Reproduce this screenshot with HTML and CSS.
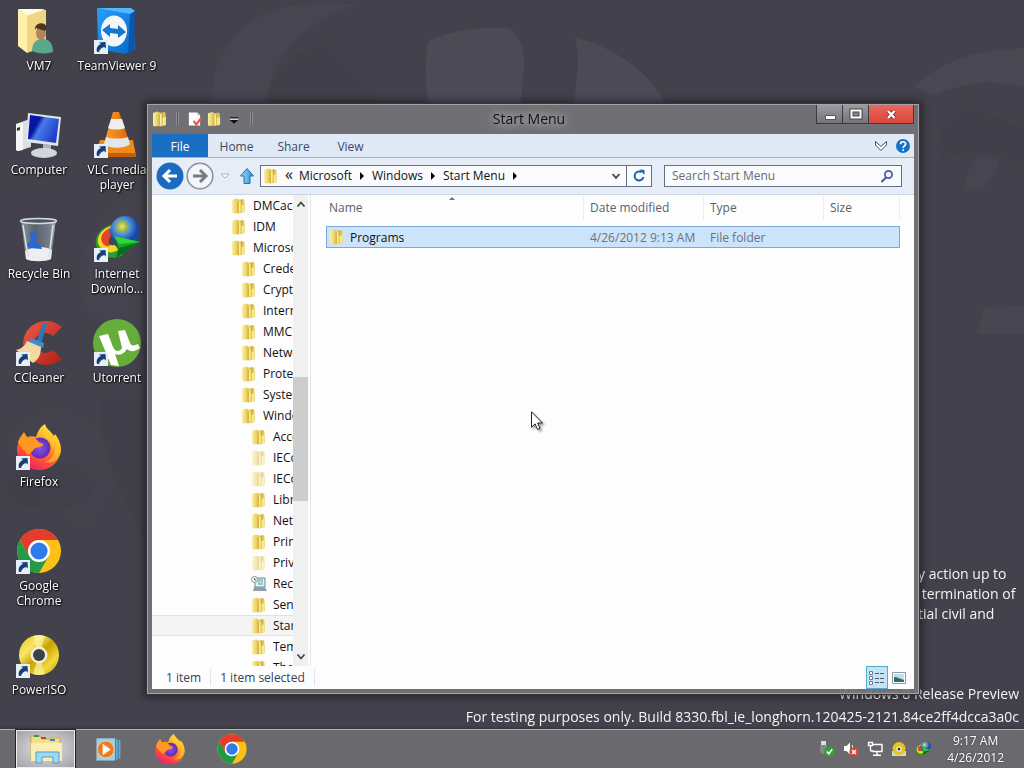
FILE: index.html
```html
<!DOCTYPE html>
<html lang="en">
<head>
<meta charset="utf-8">
<title>Start Menu</title>
<link rel="stylesheet" href="styles.css">
</head>
<body>
<svg class="defs" aria-hidden="true">
  <defs>
    <linearGradient id="gFold" x1="0" x2="1"><stop offset="0" stop-color="#fcf0a4"/><stop offset="1" stop-color="#dcc04c"/></linearGradient>
    <linearGradient id="gFoldDark" x1="0" x2="1"><stop offset="0" stop-color="#f5e070"/><stop offset=".5" stop-color="#d2b03c"/><stop offset="1" stop-color="#f0dc7e"/></linearGradient>
    <linearGradient id="gScreen" x1="0" x2="1" y2=".5"><stop offset="0" stop-color="#0a17b8"/><stop offset=".35" stop-color="#0614a0"/><stop offset=".5" stop-color="#4a7be8"/><stop offset="1" stop-color="#1c3ecb"/></linearGradient>
    <linearGradient id="gTv" x1="0" x2="1" y2="1"><stop offset="0" stop-color="#2aa0f8"/><stop offset="1" stop-color="#0766c8"/></linearGradient>
    <linearGradient id="gCone" x1="0" x2="1"><stop offset="0" stop-color="#ffa02a"/><stop offset="1" stop-color="#dd6505"/></linearGradient>
    <linearGradient id="gFox" x1=".8" y1="0" x2=".3" y2="1"><stop offset="0" stop-color="#fff14f"/><stop offset=".4" stop-color="#ff9d1e"/><stop offset=".75" stop-color="#ff4a3c"/><stop offset="1" stop-color="#e81c73"/></linearGradient>
    <radialGradient id="gFoxIn"><stop offset="0" stop-color="#8c4fe8"/><stop offset="1" stop-color="#5b2cb8"/></radialGradient>
    <radialGradient id="gGlobe" cx=".4" cy=".35"><stop offset="0" stop-color="#f2e86a"/><stop offset=".3" stop-color="#9fb84c"/><stop offset=".55" stop-color="#4d8fdc"/><stop offset="1" stop-color="#1b4aa5"/></radialGradient>
    <linearGradient id="gDisc" x1="0" x2="1" y2="1"><stop offset="0" stop-color="#e9c400"/><stop offset=".3" stop-color="#f7e76a"/><stop offset=".5" stop-color="#c89f00"/><stop offset=".75" stop-color="#f0dc3b"/><stop offset="1" stop-color="#b48f00"/></linearGradient>
    <linearGradient id="gCc" x1="0" x2="1" y2="1"><stop offset="0" stop-color="#f05a45"/><stop offset="1" stop-color="#b01f18"/></linearGradient>
    <linearGradient id="gBin" x1="0" x2="1"><stop offset="0" stop-color="#9aa4ae"/><stop offset=".4" stop-color="#5d6876"/><stop offset=".8" stop-color="#7d8793"/><stop offset="1" stop-color="#b8c0c8"/></linearGradient>
    <linearGradient id="gUp" x1="0" x2="1"><stop offset="0" stop-color="#a5e0fa"/><stop offset="1" stop-color="#1e8bd4"/></linearGradient>

    <symbol id="folder" viewBox="0 0 16 16">
      <path d="M1 2 5 .5 8 1.500v13.500l-6 .5L1 14z" fill="url(#gFold)"/>
      <path d="M7 2l5-1 1.500 1v3l.5 1V14l-6 1.500-1-.5z" fill="url(#gFoldDark)"/>
      <path d="M6.500 2.500 8 4v11l-1.500.2z" fill="#d8b43c"/>
      <path d="M8 4l1.500-1v11.500L8 15z" fill="#fbf0a2"/>
      <path d="M10.500 7l3-1v8l-3 1z" fill="#f6e891"/>
    </symbol>
    <symbol id="shortcut" viewBox="0 0 14 14">
      <path d="M0 0h14v14H0z" fill="#e6eff7"/>
      <path d="M3 12c-1-4 .5-6.500 4-8L5 2.500 11.500 2l.5 6.500L10.200 7C7 8 5.500 9.500 5 12z" fill="#173f78"/>
    </symbol>
    <symbol id="firefox" viewBox="0 0 48 48">
      <path d="M4 18c1-4 3-6 5-9l3 5c3-1 6-1 9 0C23 8 25 4 30 1c1 5 6 7 9 12l1-2c5 6 7 13 5 20-2 9-10 16-21 16C11 47 2 38 2 27c0-4 1-6 2-9z" fill="url(#gFox)"/>
      <circle cx="25" cy="25" r="10.500" fill="url(#gFoxIn)"/>
      <path d="M3 19c1-3 3-6 6-9l3 5c3-2 8-1 10 2l3 3c2 0 4 1 3 2-1 2-5 2-7 3-3 1-3 4-7 6-3 2-2-1-4-3-3-2-5-5-7-9z" fill="#ff9822"/>
      <path d="M29 13c5 2 9 7 8 13 2-1 2-4 2-6 3 8-1 17-9 19 8 2 14-3 16-10 1-7-3-13-7-17l-1 3c-3-3-6-5-8-9-2 2-3 5-1 7z" fill="#ffd22f" opacity=".6"/>
    </symbol>
    <symbol id="chrome" viewBox="0 0 48 48">
      <circle cx="24" cy="24" r="22" fill="#fbc116"/>
      <path d="M24 2A22 22 0 0 1 43.100 13H24L14.500 29.500 5 13A22 22 0 0 1 24 2z" fill="#e33b2e"/>
      <path d="M5 13l9.500 16.500L24 35l9.500-5.500L24 46A22 22 0 0 1 5 13z" fill="#239a48"/>
      <circle cx="24" cy="24" r="11" fill="#fff"/><circle cx="24" cy="24" r="8.600" fill="#2f7be8"/>
    </symbol>
    <symbol id="idm" viewBox="0 0 48 48">
      <path d="M25 9C8 9-2 24 5 35c5 8 17 10 25 5l-6-9c-5 3-9 1-10-3-1-5 4-9 9-9z" fill="#2b9b35"/>
      <path d="M24 10C9 11 1 23 7 32c4 6 12 7 18 3l-3-5c-4 1-7 0-8-4-1-5 4-8 9-8z" fill="#f5d824"/>
      <path d="M24 12C13 12 6 20 9 27c2 4 5 5 8 4-4-7 2-12 7-13z" fill="#e4422a"/>
      <circle cx="32" cy="16" r="15" fill="url(#gGlobe)"/>
      <path d="M21 21l26 6-24 16 3-10z" fill="#0faa24"/><path d="M26 33l21-6-24 16z" fill="#067016"/><path d="M21 21l26 6-21 2z" fill="#33d33a"/>
    </symbol>
    <symbol id="disc" viewBox="0 0 48 48">
      <circle cx="24" cy="24" r="20" fill="url(#gDisc)"/>
      <path d="M24 24 18 5a20 20 0 0 1 12 0zM24 24l6 19a20 20 0 0 1-12 0z" fill="#fff9b8" opacity=".6"/>
      <circle cx="24" cy="24" r="8.500" fill="#f3eed3"/><circle cx="24" cy="24" r="6" fill="#3d4148"/>
    </symbol>
  </defs>
</svg>

<main class="desktop">
  <svg class="wallpaper" viewBox="0 0 1024 768" preserveAspectRatio="xMidYMid slice" aria-hidden="true">
    <g fill="#4c4a55">
      <path d="M212 104c-3-48 30-100 100-100l50 0c-50 12-90 45-96 100z" opacity=".5"/>
      <path d="M426 70c0-12 0-26 4-30 24-10 50-13 76-12 8 0 17 15 18 27 0 15-1 34-4 49h-90c-4-10-4-22-4-34z"/>
      <path d="M575 38c38 8 75 34 91 66h-92c2-22 7-44 1-66z"/>
      <path d="M910 92c20-25 55-42 114-44v40c-30-10-62-6-90 8l-15-8z" opacity=".7"/>
      <path d="M964 192c4-20 6-30 14-34 16 0 26 1 18 14-8 12-12 18-32 20z" opacity=".5"/>
      <path d="M984 308l40-2v28h-48z" opacity=".6"/>
      <path d="M120 205c-40 30-50 70-30 110l58 30V180z" opacity=".3"/>
      <path d="M10 440c10-30 60-40 88-10 25 30 10 70-10 100-30-20-70-40-78-90z" opacity=".2"/>
    </g>
    <g fill="#3e3c46">
      <path d="M268 104c2-30 20-50 55-60l60 60z" opacity=".4"/>
      <path d="M940 160c-8-25 8-50 36-50l48 18v40c-24-16-50-20-84-8z" opacity=".3"/>
      <ellipse cx="50" cy="486" rx="44" ry="24" opacity=".3"/>
      <path d="M100 400h48v150c-20-50-50-90-48-150z" opacity=".3"/>
    </g>
  </svg>

  <div class="watermark">
    <p class="legal">y action up to<br>&nbsp;termination of<br>tial civil and</p>
    <p>Windows 8 Release Preview</p>
    <p>For testing purposes only. Build 8330.fbl_ie_longhorn.120425-2121.84ce2ff4dcca3a0c</p>
  </div>

  <nav class="icons" aria-label="Desktop">
    <a class="icon" href="#vm7">
      <svg viewBox="0 0 48 48"><path d="M6 2l25 1v32l-13 5z" fill="#ecd38a"/><path d="M3 2l9 7v37L3 39z" fill="#fff0ac"/><path d="M3 2h27l-18 7z" fill="#fffbe0"/><path d="M12 9l19-6v36l-19 7z" fill="#f0d684"/><path d="M17 44c0-9 5-12 11-12s10 4 10 13c-6 2-15 2-21-1z" fill="#58a98b"/><ellipse cx="26" cy="26" rx="5" ry="7" fill="#b5835a"/><path d="M20 23c-1-8 11-9 12-2l-2 3-9-3z" fill="#4b3324"/></svg>
      <span>VM7</span></a>
    <a class="icon" href="#computer">
      <svg viewBox="0 0 48 48"><path d="M1 13l11-4 4 1v26L3 40l-2-1z" fill="#dcdfe2"/><path d="M1 13l7-1v27l-5 1-2-1z" fill="#f4f5f6"/><path d="M2 17l3-1v3l-3 1z" fill="#333"/><path d="M28 33l8 1v5h-8z" fill="#aeb5bc"/><ellipse cx="29" cy="42" rx="13" ry="5" fill="#d3d7db"/><path d="M13 2l33 4-3 29-32-4z" fill="#dfe6ee"/><path d="M15 4l29 4-3 24-28-4z" fill="url(#gScreen)"/></svg>
      <span>Computer</span></a>
    <a class="icon" href="#recycle">
      <svg viewBox="0 0 48 48"><path d="M6 5l35-1-5 40c-6 3-20 3-25 0z" fill="url(#gBin)" opacity=".85"/><path d="M10 36c8-5 20-5 27-1l-1 9c-6 3-20 3-25 0z" fill="#eceef0"/><path d="M15 18l5-2 2 9-3 4 6 0 2 5-13-1-2-4 4-4z" fill="#2868d0"/><ellipse cx="23.500" cy="6" rx="18" ry="2.500" fill="#4c5662" stroke="#d5dbe0" stroke-width="1.500"/><path d="M8 10l5 32M38 10l-4 32" stroke="#dce2e7" stroke-width="1.500"/></svg>
      <span>Recycle Bin</span></a>
    <a class="icon" href="#ccleaner">
      <svg viewBox="0 0 48 48"><path d="M47 8A23 22 0 1 0 47 40l-9-9a11 10 0 1 1 0-14z" fill="url(#gCc)"/><path d="M28 4l4 1-6 20-5-2z" fill="#2e78b4"/><path d="M16 19l13 5-1 5-15-5z" fill="#3a8fd0"/><path d="M12 22l14 6c0 8-3 13-8 16L1 31c5-1 9-4 11-9z" fill="#f4d9a4"/></svg>
      <svg class="badge"><use href="#shortcut"/></svg>
      <span>CCleaner</span></a>
    <a class="icon" href="#firefox"><svg><use href="#firefox"/></svg><svg class="badge"><use href="#shortcut"/></svg><span>Firefox</span></a>
    <a class="icon" href="#chrome"><svg><use href="#chrome"/></svg><svg class="badge"><use href="#shortcut"/></svg><span>Google Chrome</span></a>
    <a class="icon" href="#poweriso"><svg><use href="#disc"/></svg><svg class="badge"><use href="#shortcut"/></svg><span>PowerISO</span></a>
    <a class="icon" href="#teamviewer">
      <svg viewBox="0 0 48 48"><path d="M4 1l36 3 2 38-10 5L5 42z" fill="url(#gTv)"/><path d="M37 6l5-2-1 38-6 5z" fill="#0a58ae"/><path d="M4 1h34l4 3-5 3z" fill="#54b8ff"/><ellipse cx="21" cy="24" rx="13" ry="15.500" fill="#f4f6f8"/><path d="M9 23l8-6v4l8 1v-4l8 7-8 6v-4l-8-1v4z" fill="#1577cf"/></svg>
      <svg class="badge"><use href="#shortcut"/></svg><span>TeamViewer 9</span></a>
    <a class="icon" href="#vlc">
      <svg viewBox="0 0 48 48"><path d="M7 29h33l3 16H2z" fill="#f08a1b"/><path d="M2 42h41v4H2z" fill="#c45f08"/><path d="M20 1h6l11 32c-5 5-21 5-26 0z" fill="url(#gCone)"/><path d="M18 8h11l3 9c-4 2-13 2-17 0z" fill="#eceef0"/><path d="M13 26c5 2 17 2 22 0l2 7c-5 5-21 5-26 0z" fill="#e4e7ea"/></svg>
      <svg class="badge"><use href="#shortcut"/></svg><span>VLC media player</span></a>
    <a class="icon" href="#idm"><svg><use href="#idm"/></svg><svg class="badge"><use href="#shortcut"/></svg><span>Internet Downlo...</span></a>
    <a class="icon" href="#utorrent">
      <svg viewBox="0 0 48 48"><circle cx="24" cy="24" r="24" fill="#66ad3c"/><path d="M6 17l9-2 5 13c2 5 7 5 9 1L25 12l7-1 5 13c1 3 4 3 8 1l2 4c-5 4-10 4-13 1-3 5-8 7-12 5l4 12-8-1z" fill="#fff"/></svg>
      <svg class="badge"><use href="#shortcut"/></svg><span>Utorrent</span></a>
  </nav>

  <section class="window" aria-label="Start Menu">
    <header class="titlebar">
      <div class="quick">
        <svg class="i16"><use href="#folder"/></svg><i></i>
        <button aria-label="Properties"><svg viewBox="0 0 16 16"><path d="M2 1h9l3 3v11H2z" fill="#fff"/><path d="M11 1v3h3z" fill="#bbb"/><path d="M7 10l3 4 5-7" fill="none" stroke="#e0604c" stroke-width="2.500"/></svg></button>
        <button aria-label="New folder"><svg><use href="#folder"/></svg></button>
        <button aria-label="Customize"><svg viewBox="0 0 16 16"><path d="M3 6h9v1.500H3zM3 9h9l-4.500 4z" fill="#111"/><path d="M3 7.500h9V9H3z" fill="#ddd"/></svg></button><i></i>
      </div>
      <h1>Start Menu</h1>
      <div class="controls">
        <button class="min" aria-label="Minimize"><svg viewBox="0 0 16 16"><path d="M3.500 9.500h10v4h-10z" fill="#fff" stroke="#555"/></svg></button>
        <button class="max" aria-label="Maximize"><svg viewBox="0 0 16 16"><path d="M3.500 4.500h9v7h-9z" fill="none" stroke="#444" stroke-width="4"/><path d="M3.500 4.500h9v7h-9z" fill="none" stroke="#fff" stroke-width="2"/></svg></button>
        <button class="close" aria-label="Close"><svg viewBox="0 0 16 16"><path d="M5 5l6.500 7M11.500 5 5 12" stroke="#7a2c28" stroke-width="4"/><path d="M5 5l6.500 7M11.500 5 5 12" stroke="#fff" stroke-width="2.400"/></svg></button>
      </div>
    </header>

    <div class="client">
      <nav class="ribbon">
        <button class="file">File</button><button>Home</button><button>Share</button><button>View</button>
        <div class="help">
          <button aria-label="Expand ribbon"><svg viewBox="0 0 16 16"><path d="M2.500 3.500 8 8.500l5.500-5v3.500L8 12.500 2.500 7z" fill="#fff" stroke="#3f4d70"/></svg></button>
          <button aria-label="Help"><svg viewBox="0 0 16 16"><circle cx="8" cy="8" r="7" fill="#1571c6"/><path d="M5.500 6.200C5.500 3 10.700 3 10.600 6c0 1.800-2.400 1.900-2.400 4M8.200 11.300v1.700" fill="none" stroke="#fff" stroke-width="1.700"/></svg></button>
        </div>
      </nav>

      <div class="address-row">
        <button class="round" aria-label="Back"><svg viewBox="0 0 28 28"><circle cx="14" cy="14" r="13.500" fill="#1b6cc0"/><path d="M21 14H9M14 8l-6 6 6 6" fill="none" stroke="#fff" stroke-width="3"/></svg></button>
        <button class="round" aria-label="Forward"><svg viewBox="0 0 28 28"><circle cx="14" cy="14" r="12.800" fill="#f3f6f9" stroke="#8b8f96" stroke-width="1.500"/><path d="M7 14h12M14 8l6 6-6 6" fill="none" stroke="#777c83" stroke-width="3"/></svg></button>
        <button class="recent" aria-label="Recent locations"><svg viewBox="0 0 12 12"><path d="M2 4h8L6 8z" fill="#fff" stroke="#a9b4c4"/></svg></button>
        <button class="up" aria-label="Up"><svg viewBox="0 0 16 18"><path d="M8 1.500 14.500 9H11v7.500H5V9H1.500z" fill="url(#gUp)" stroke="#1f6fae"/></svg></button>
        <div class="address">
          <svg class="i16"><use href="#folder"/></svg>
          <button class="chev">«</button>
          <a href="#microsoft">Microsoft</a><svg class="sep" viewBox="0 0 6 8"><path d="M1 0l4 4-4 4z"/></svg>
          <a href="#windows">Windows</a><svg class="sep" viewBox="0 0 6 8"><path d="M1 0l4 4-4 4z"/></svg>
          <a href="#start">Start Menu</a><svg class="sep" viewBox="0 0 6 8"><path d="M1 0l4 4-4 4z"/></svg>
          <button class="drop" aria-label="Previous locations"><svg viewBox="0 0 10 10"><path d="M1.500 3 5 6.800 8.500 3" fill="none" stroke="#444" stroke-width="1.800"/></svg></button>
          <button class="refresh" aria-label="Refresh"><svg viewBox="0 0 14 14"><path d="M9.500 3.200A4.500 4.500 0 1 0 11.500 8" fill="none" stroke="#1c5fae" stroke-width="1.900"/><path d="M7.500.5 12.500 1v5z" fill="#1c5fae"/></svg></button>
        </div>
        <label class="search">
          <input type="text" placeholder="Search Start Menu" aria-label="Search Start Menu">
          <svg viewBox="0 0 14 14"><circle cx="8.500" cy="5.500" r="3.600" fill="#eef3fa" stroke="#4c5f9c" stroke-width="1.800"/><path d="M6 8.500 1.500 13" stroke="#4c5f9c" stroke-width="2.200"/></svg>
        </label>
      </div>

      <div class="body">
        <aside class="side">
          <ul class="tree">
            <li><svg><use href="#folder"/></svg>DMCache</li>
            <li><svg><use href="#folder"/></svg>IDM</li>
            <li><svg><use href="#folder"/></svg>Microsoft</li>
            <li class="l2"><svg><use href="#folder"/></svg>Credentials</li>
            <li class="l2"><svg><use href="#folder"/></svg>Crypto</li>
            <li class="l2"><svg><use href="#folder"/></svg>Internet Explorer</li>
            <li class="l2"><svg><use href="#folder"/></svg>MMC</li>
            <li class="l2"><svg><use href="#folder"/></svg>Network</li>
            <li class="l2"><svg><use href="#folder"/></svg>Protect</li>
            <li class="l2"><svg><use href="#folder"/></svg>SystemCertificates</li>
            <li class="l2"><svg><use href="#folder"/></svg>Windows</li>
            <li class="l3"><svg><use href="#folder"/></svg>AccountPictures</li>
            <li class="l3 dim"><svg><use href="#folder"/></svg>IECompatCache</li>
            <li class="l3 dim"><svg><use href="#folder"/></svg>IECompatUACache</li>
            <li class="l3"><svg><use href="#folder"/></svg>Libraries</li>
            <li class="l3"><svg><use href="#folder"/></svg>Network Shortcuts</li>
            <li class="l3"><svg><use href="#folder"/></svg>Printer Shortcuts</li>
            <li class="l3 dim"><svg><use href="#folder"/></svg>PrivacIE</li>
            <li class="l3"><svg viewBox="0 0 16 16"><path d="M4 2h10v9H4z" fill="#e9f4f4" stroke="#5b8e92"/><path d="M7 4h5M7 6h2M10 6h2M7 8h5" stroke="#3fa0a6"/><circle cx="3.500" cy="3.500" r="3" fill="#fff" stroke="#888"/><path d="M3.500 2v2H5" fill="none" stroke="#555"/><path d="M3 11h11l2 4H2z" fill="#8ba0a8"/></svg>Recent</li>
            <li class="l3"><svg><use href="#folder"/></svg>SendTo</li>
            <li class="l3 current"><svg><use href="#folder"/></svg>Start Menu</li>
            <li class="l3"><svg><use href="#folder"/></svg>Templates</li>
            <li class="l3"><svg><use href="#folder"/></svg>Themes</li>
          </ul>
          <div class="scroll">
            <button aria-label="Scroll up"><svg viewBox="0 0 10 10"><path d="M1.500 7.500 5 3.500l3.500 4" fill="none" stroke="#444" stroke-width="1.800"/></svg></button>
            <div class="track"><div class="thumb"></div></div>
            <button aria-label="Scroll down"><svg viewBox="0 0 10 10"><path d="M1.500 2.500 5 6.500l3.500-4" fill="none" stroke="#444" stroke-width="1.800"/></svg></button>
          </div>
        </aside>
        <div class="files">
          <table>
            <colgroup><col><col class="c"><col class="c"><col class="s"></colgroup>
            <thead><tr><th><div>Name<svg class="sort" viewBox="0 0 6 3"><path d="M0 3l3-3 3 3z" fill="#6b7280"/></svg></div></th><th><div>Date modified</div></th><th><div>Type</div></th><th><div>Size</div></th></tr></thead>
            <tbody><tr><td class="name"><div><svg class="i16"><use href="#folder"/></svg>Programs</div></td><td>4/26/2012 9:13 AM</td><td>File folder</td><td></td></tr></tbody>
          </table>
        </div>
      </div>

      <footer class="status">
        <span>1 item</span><span>1 item selected</span>
        <div class="views">
          <button class="on" aria-label="Details"><svg viewBox="0 0 18 16"><path d="M1.500 1.500h3v3h-3zM1.500 6.500h3v3h-3zM1.500 11.500h3v3h-3z" fill="#fff" stroke="#6b7d90"/><path d="M7 3.500h4M12 3.500h4M7 8.500h4M12 8.500h4M7 12.500h4M12 12.500h4" stroke="#4d6073"/></svg></button>
          <button aria-label="Large icons"><svg viewBox="0 0 14 12"><path d="M.5.5h13v11H.5z" fill="#fff" stroke="#8f9aa5"/><path d="M2 2h10v8H2z" fill="#bfe0ee"/><path d="M2 5c4 0 6 2 10 3v2H2z" fill="#2f6b68"/></svg></button>
        </div>
      </footer>
    </div>
  </section>

  <svg class="cursor" viewBox="0 0 12 20" aria-hidden="true"><path d="M.5.8v15.500l3.600-3.400 2.400 5.600 2.500-1.100-2.400-5.400h4.900z" fill="#fff" stroke="#222"/></svg>
</main>

<footer class="taskbar">
  <nav class="apps">
    <button class="active" aria-label="File Explorer"><svg viewBox="0 0 36 32"><path d="M3 3h9l2 3h7l1-1h10v22H3z" fill="#f6dd88" stroke="#c9a94a"/><path d="M6 2h5v2H6z" fill="#2f9a4a"/><path d="M13 4h5v2h-5z" fill="#c9402f"/><path d="M22 6h5v2h-5z" fill="#3d82c8"/><path d="M3 10h31v18H3z" fill="#fbeeb4"/><path d="M8 30V19h23v11h-6v-6H14v6z" fill="#9fd8f2" stroke="#4c9fc8"/></svg></button>
    <button aria-label="Windows Media Player"><svg viewBox="0 0 36 32"><path d="M5 4h21v25H5z" fill="#9ecfe8"/><path d="M27 5h2v23h-2zM30 6h2v21h-2z" fill="#56b0de"/><circle cx="15.500" cy="16.500" r="9.500" fill="#ee7b22" stroke="#f7d3ae"/><path d="M12 10l9 6.500-9 6.500z" fill="#fff"/></svg></button>
    <button aria-label="Firefox"><svg><use href="#firefox"/></svg></button>
    <button aria-label="Google Chrome"><svg><use href="#chrome"/></svg></button>
  </nav>
  <div class="tray">
    <svg viewBox="0 0 16 16"><path d="M2 0h5v4H2z" fill="#ddd"/><path d="M1 4h7v8c-3 2-5 1-7-1z" fill="#888"/><circle cx="10.500" cy="10.500" r="5.300" fill="#2ba336"/><path d="M7.800 10.500l2 2.200 3.400-4.500" fill="none" stroke="#fff" stroke-width="1.600"/></svg>
    <svg viewBox="0 0 16 16"><path d="M1 5h2.500L7 1.500v12L3.500 10H1z" fill="#fff"/><path d="M9 4c1 2 1 4 0 6" fill="none" stroke="#fff"/><circle cx="11" cy="11" r="4.600" fill="#dc3d33"/><path d="M9 9l4 4M13 9l-4 4" stroke="#fff" stroke-width="1.500"/></svg>
    <svg viewBox="0 0 16 16"><path d="M6 3.500h9v7H5.500" fill="#666" stroke="#fff" stroke-width="1.400"/><path d="M10 11v3M6 14.300h8" stroke="#fff" stroke-width="1.400"/><path d="M1.500 1.500h4v3h-4zM3.500 5v5M3.500 10h3" fill="none" stroke="#fff" stroke-width="1.300"/></svg>
    <svg viewBox="0 0 16 16"><path d="M1 10h14v5H1z" fill="#d8d5c4"/><circle cx="8" cy="7.500" r="6.500" fill="#e5c325"/><circle cx="8" cy="8" r="2.600" fill="#fff"/><circle cx="8" cy="8" r="1.500" fill="#333"/></svg>
    <svg><use href="#idm"/></svg>
    <time>9:17 AM<br>4/26/2012</time>
  </div>
</footer>
</body>
</html>
```
FILE: styles.css
```css
* { box-sizing: border-box; }
html, body { margin: 0; height: 100%; }
body {
  display: flex;
  flex-direction: column;
  font: 12px/15px "Open Sans", "Noto Sans", sans-serif;
  background: #43414b;
  overflow: hidden;
}
button { font: inherit; color: inherit; border: 0; padding: 0; background: none; display: flex; align-items: center; justify-content: center; }
a { color: inherit; text-decoration: none; }
svg { display: block; flex: none; }
.defs { position: absolute; width: 0; height: 0; }
.i16 { width: 16px; height: 16px; }

.desktop { position: relative; flex: 1; min-height: 0; }
.wallpaper { position: fixed; inset: 0; width: 100%; height: 100%; }

.icons {
  position: relative;
  height: 100%;
  display: grid;
  grid-auto-flow: column;
  grid-template-rows: repeat(7, 104px);
  grid-auto-columns: 78px;
  justify-content: start;
}
.icon {
  position: relative;
  display: flex;
  flex-direction: column;
  align-items: center;
  gap: 3px;
  padding: 7px 4px 0;
  color: #fff;
  text-align: center;
  text-shadow: 1px 1px 2px #000, 0 0 2px #000;
}
.icon svg { width: 48px; height: 48px; }
.icon .badge { position: absolute; left: 16px; top: 40px; width: 14px; height: 14px; }
.icon span { margin: 0 -6px; }

.watermark {
  position: absolute;
  right: 5px;
  bottom: 2px;
  color: #f4f4f4;
  font-size: 14px;
  line-height: 20px;
  text-align: right;
}
.watermark p { margin: 3px 0 0; }
.watermark .legal { margin: 0 0 60px auto; width: 101px; text-align: left; white-space: nowrap; }

.window {
  position: absolute;
  left: 147px;
  top: 104px;
  right: 105px;
  bottom: 35px;
  display: flex;
  flex-direction: column;
  padding: 0 4px 4px;
  background: rgba(116, 115, 119, .93);
  border: 1px solid #a3a2a6;
  box-shadow: 0 0 0 1px #35343a, 0 0 8px 3px rgba(0, 0, 0, .45);
}
.titlebar { display: grid; grid-template-columns: 1fr auto 1fr; height: 29px; align-items: center; }
.titlebar h1 { margin: 0; font-size: 14px; line-height: 20px; font-weight: 400; color: #111; text-shadow: 0 0 8px #bbb, 0 0 8px #bbb; padding: 0 8px 2px 0; }
.quick { display: flex; align-items: center; gap: 5px; padding-bottom: 2px; }
.quick i { width: 3px; height: 13px; border: 1px solid #8d8c90; border-top: 0; border-bottom: 0; background: #5c5b5f; margin: 0 3px; }
.quick button svg { width: 15px; height: 16px; }
.controls { display: flex; justify-self: end; align-self: start; border: 1px solid #3c3b3f; border-top: 0; height: 19px; }
.controls button { width: 26px; background: linear-gradient(#9c9b9f, #757478); border-right: 1px solid #3c3b3f; }
.controls svg { width: 16px; height: 16px; }
.controls .close { width: 44px; border: 0; background: linear-gradient(#e8685f, #dc443c); }

.client { flex: 1; min-height: 0; display: flex; flex-direction: column; background: #fdfdfd; }
.ribbon { display: flex; height: 24px; background: #dfeaf6; border-bottom: 1px solid #9fb3cd; color: #3b4963; }
.ribbon > button { width: 57px; padding-top: 1px; }
.ribbon > .file { width: 56px; background: #1a6fc4; color: #fff; }
.help { display: flex; margin-left: auto; gap: 6px; padding-right: 3px; }
.help svg { width: 16px; height: 16px; }

.address-row { display: flex; align-items: center; height: 37px; padding: 0 12px 1px 4px; background: #e6edf7; border-bottom: 1px solid #ccd5e2; }
.round svg { width: 28px; height: 28px; }
.round + .round { margin-left: 2px; }
.recent { width: 22px; }
.recent svg { width: 12px; height: 12px; }
.up { width: 22px; margin-right: 2px; }
.up svg { width: 16px; height: 18px; }
.address { flex: 1; display: flex; align-items: center; height: 22px; padding-left: 2px; border: 1px solid #64708a; background: #f9fbfd; color: #111; }
.chev { width: 20px; font-size: 16px; padding-bottom: 3px; }
.sep { width: 6px; height: 8px; margin: 0 7px; }
.drop { width: 20px; margin-left: auto; }
.drop svg { width: 10px; height: 10px; }
.refresh { align-self: stretch; width: 25px; border-left: 1px solid #64708a; }
.refresh svg { width: 14px; height: 14px; }
.search { display: flex; align-items: center; width: 238px; height: 22px; margin-left: 12px; padding: 0 7px; border: 1px solid #64708a; background: #f9fbfd; }
.search input { flex: 1; min-width: 0; border: 0; padding: 0; background: none; font: inherit; outline: 0; }
.search input::placeholder { color: #686c72; opacity: 1; }
.search svg { width: 14px; height: 14px; }

.body { flex: 1; min-height: 0; display: flex; }
.side { width: 159px; display: flex; padding-right: 2px; border-right: 1px solid #e3e6ea; }
.tree { flex: 1; min-width: 0; margin: 0; padding: 0; list-style: none; overflow: hidden; color: #111; white-space: nowrap; }
.tree li { display: flex; align-items: center; gap: 6px; height: 21px; padding-left: 79px; }
.tree li svg { width: 16px; height: 16px; }
.tree .l2 { padding-left: 89px; }
.tree .l3 { padding-left: 99px; }
.tree .dim svg { opacity: .5; }
.tree .current { background: #f4f4f5; border: 1px solid #e2e2e4; border-width: 1px 0; }
.scroll { width: 15px; display: flex; flex-direction: column; background: #f0f0f1; }
.scroll button { height: 18px; }
.scroll svg { width: 10px; height: 10px; }
.track { flex: 1; padding-top: 164px; }
.thumb { width: 15px; height: 124px; background: #cdcdce; }

.files { flex: 1; padding: 0 14px 0 15px; }
table { width: 100%; table-layout: fixed; border-collapse: collapse; color: #6d7178; }
.c { width: 120px; }
.s { width: 76px; }
th { height: 31px; padding: 0; font-weight: 400; text-align: left; vertical-align: top; color: #5b616c; }
th div { position: relative; height: 25px; line-height: 25px; padding-left: 6px; border-right: 1px solid #e9edf2; }
th:first-child div { padding-left: 3px; }
.sort { position: absolute; left: 48%; top: 2px; width: 6px; height: 3px; }
tbody tr { background: #cce4fb; outline: 1px solid #7ba9dc; outline-offset: -1px; }
td { height: 22px; padding: 0 0 0 6px; white-space: nowrap; }
.name { padding-left: 3px; color: #111; }
.name div { display: flex; align-items: center; gap: 5px; }

.status { display: flex; align-items: center; height: 23px; color: #33415c; }
.status span { line-height: 17px; padding: 0 9px; border-right: 1px solid #e1e5ea; }
.status span:first-child { padding-left: 14px; }
.views { display: flex; margin-left: auto; padding-right: 4px; }
.views button { width: 22px; height: 23px; }
.views .on { background: #c2e4f4; border: 1px solid #56aacc; }
.views .on svg { width: 18px; height: 16px; }
.views svg { width: 14px; height: 12px; }

.cursor { position: absolute; left: 531px; top: 411px; width: 12px; height: 20px; filter: drop-shadow(2px 2px 1px rgba(0, 0, 0, .35)); }

.taskbar { position: relative; display: flex; justify-content: space-between; height: 39px; border-top: 1px solid #b5b4b9; background: #6a696d; box-shadow: 0 -1px 2px #333; }
.apps { display: flex; gap: 3px; padding-left: 16px; }
.apps button { width: 59px; }
.apps svg { width: 32px; height: 32px; }
.apps .active { background: radial-gradient(#e4e4e6, #a2a1a6); border: 1px solid #eee; outline: 1px solid #222; outline-offset: 0; }
.apps .active svg { width: 36px; }
.tray { display: flex; align-items: center; gap: 8px; padding-right: 20px; color: #fff; }
.tray svg { width: 16px; height: 16px; }
.tray time { margin-left: 8px; line-height: 17px; text-align: center; text-shadow: 0 0 2px #333; }
```
